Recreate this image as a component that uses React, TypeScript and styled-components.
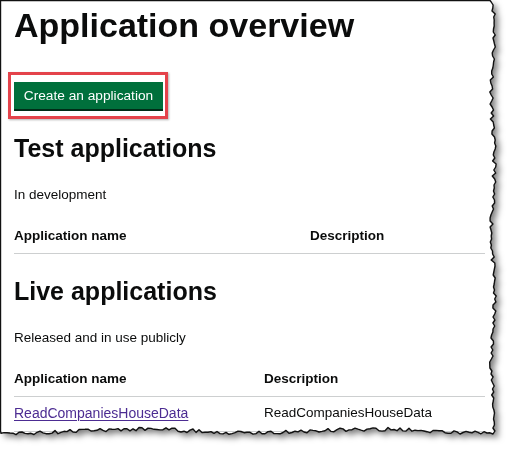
import React from 'react'
import styled, { createGlobalStyle } from 'styled-components'

const GlobalStyle = createGlobalStyle`
  body {
    margin: 0;
    background: #fff;
    color: #0b0c0c;
    font-family: "Liberation Sans", Arial, sans-serif;
  }
`

const EDGE_X = 493
const EDGE_Y = 431

// seeded noise so the torn edge is the same on every render
const seeded = (seed: number) => {
  let s = seed
  return () => {
    s = (s * 16807) % 2147483647
    return s / 2147483647
  }
}

const tornEdge = (): [number, number][] => {
  const rand = seeded(11)
  const pts: [number, number][] = [[0.5, 0.5], [EDGE_X - 3, 0.5]]
  for (let y = 2; y <= EDGE_Y; y += 3) {
    pts.push([EDGE_X + Math.sin(y / 21) * 1.4 + (rand() - 0.5) * 3.8, y])
  }
  for (let x = EDGE_X; x >= 0; x -= 3) {
    pts.push([x, EDGE_Y + Math.sin(x / 37 + 1) * 1.8 + (rand() - 0.5) * 3.8])
  }
  pts.push([0.5, EDGE_Y])
  return pts
}

const EDGE = tornEdge()
const CLIP = `polygon(${EDGE.map(([x, y]) => `${x.toFixed(1)}px ${y.toFixed(1)}px`).join(', ')})`
const POINTS = EDGE.map(([x, y]) => `${x.toFixed(1)},${y.toFixed(1)}`).join(' ')

const Frame = styled.div`
  position: relative;
  width: 516px;
  height: 454px;
  overflow: hidden;
  background: #fff;
`

const ShadowLayer = styled.div`
  filter: drop-shadow(4px 4px 3px rgba(0, 0, 0, 0.5));
`

const Paper = styled.main<{ $clip: string }>`
  box-sizing: border-box;
  height: 454px;
  padding: 5px 0 0 14px;
  background: #fff;
  clip-path: ${p => p.$clip};
`

const Outline = styled.svg`
  position: absolute;
  left: 0;
  top: 0;
  pointer-events: none;
`

const Title = styled.h1`
  margin: 0;
  font-size: 34px;
  line-height: 40px;
  font-weight: 700;
`

const Highlight = styled.div`
  width: fit-content;
  margin: 27px 0 0 -6px;
  padding: 7px 2px 5px 3px;
  border: 3px solid #e4434b;
  box-shadow: 1px 1px 2px rgba(0, 0, 0, 0.3);
`

const Button = styled.button`
  display: block;
  width: 149px;
  height: 27px;
  margin: 0 0 2px;
  padding: 0;
  border: none;
  background: #00703c;
  box-shadow: 0 2px 0 #002d18;
  color: #fff;
  font-family: "Liberation Sans", Arial, sans-serif;
  font-size: 13.7px;
  line-height: 27px;
  text-align: center;
`

const SectionTitle = styled.h2<{ $gap: number }>`
  margin: ${p => p.$gap}px 0 0;
  font-size: 25px;
  line-height: 30px;
  font-weight: 700;
`

const Hint = styled.p`
  margin: 22px 0 0;
  font-size: 13.5px;
  line-height: 20px;
`

const Table = styled.div<{ $firstCol: number }>`
  display: grid;
  grid-template-columns: ${p => p.$firstCol}px 1fr;
  width: 471px;
  margin-top: 15px;
  font-size: 13.5px;
  line-height: 20px;
`

const Cell = styled.div<{ $head?: boolean }>`
  padding: 6px 0 7px;
  border-bottom: 1px solid #cdcfd0;
  font-weight: ${p => (p.$head ? 700 : 400)};
  white-space: nowrap;
`

const AppLink = styled.a`
  color: #4c2c92;
  font-size: 14px;
  text-decoration: underline;
  text-decoration-thickness: 1px;
  text-underline-offset: 2px;
`

const App = () => (
  <Frame>
    <GlobalStyle />
    <ShadowLayer>
      <Paper $clip={CLIP}>
        <Title>Application overview</Title>
        <Highlight>
          <Button>Create an application</Button>
        </Highlight>

        <SectionTitle $gap={14}>Test applications</SectionTitle>
        <Hint>In development</Hint>
        <Table $firstCol={296}>
          <Cell $head>Application name</Cell>
          <Cell $head>Description</Cell>
        </Table>

        <SectionTitle $gap={22}>Live applications</SectionTitle>
        <Hint>Released and in use publicly</Hint>
        <Table $firstCol={250}>
          <Cell $head>Application name</Cell>
          <Cell $head>Description</Cell>
          <Cell><AppLink href="#">ReadCompaniesHouseData</AppLink></Cell>
          <Cell>ReadCompaniesHouseData</Cell>
        </Table>
      </Paper>
    </ShadowLayer>
    <Outline width={516} height={454}>
      <polygon points={POINTS} fill="none" stroke="#111" strokeWidth={1.4} strokeLinejoin="round" />
    </Outline>
  </Frame>
)

export default App
